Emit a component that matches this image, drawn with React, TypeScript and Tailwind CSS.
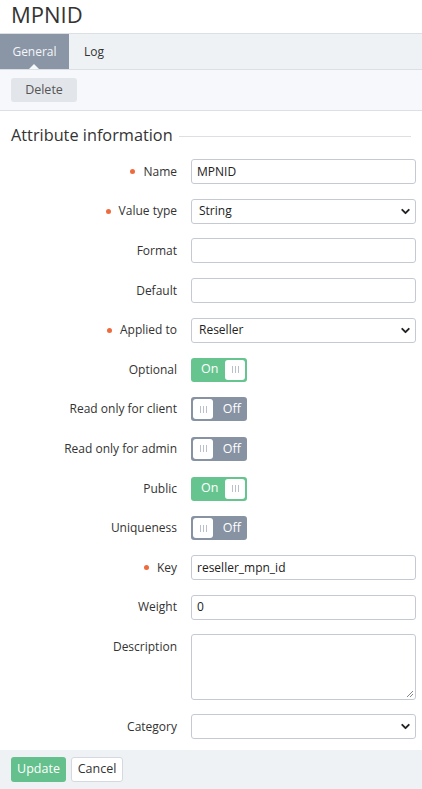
import { ChevronDown } from "lucide-react";

function Label({ text, required }: { text: string; required?: boolean }) {
  return (
    <div className="w-[177px] shrink-0 flex justify-end items-center gap-[8px] text-[12px] text-[#333]">
      {required && <span className="w-[5px] h-[5px] rounded-full bg-[#ef6a3c]" />}
      <span>{text}</span>
    </div>
  );
}

function TextInput({ value }: { value?: string }) {
  return (
    <div className="w-[225px] h-[25px] border border-[#c5cad2] rounded-[3px] bg-white flex items-center px-[5px] text-[12px] text-[#222]">
      {value}
    </div>
  );
}

function SelectBox({ value }: { value?: string }) {
  return (
    <div className="w-[225px] h-[25px] border border-[#c5cad2] rounded-[3px] bg-white flex items-center justify-between pl-[7px] pr-[3px] text-[12px] text-[#222]">
      <span>{value}</span>
      <ChevronDown size={13} strokeWidth={3.5} className="text-[#222]" />
    </div>
  );
}

function Knob() {
  return (
    <div className="w-[20px] h-[20px] bg-white rounded-[3px] flex items-center justify-center gap-[2px]">
      <span className="w-px h-[7px] bg-[#b9c0ca]" />
      <span className="w-px h-[7px] bg-[#b9c0ca]" />
      <span className="w-px h-[7px] bg-[#b9c0ca]" />
    </div>
  );
}

function Toggle({ on }: { on: boolean }) {
  return on ? (
    <div className="w-[56px] h-[24px] rounded-[3px] bg-[#66c58f] flex items-center justify-between pl-[10px] pr-[2px] text-[12.5px] text-white">
      <span>On</span>
      <Knob />
    </div>
  ) : (
    <div className="w-[56px] h-[24px] rounded-[3px] bg-[#8792a3] flex items-center justify-between pl-[2px] pr-[6px] text-[12.5px] text-white">
      <Knob />
      <span>Off</span>
    </div>
  );
}

function Row({ label, required, children }: { label: string; required?: boolean; children: React.ReactNode }) {
  return (
    <div className="flex items-center gap-[14px] h-[39.6px]">
      <Label text={label} required={required} />
      {children}
    </div>
  );
}

export default function App() {
  return (
    <div className="w-[422px] h-[789px] bg-white flex flex-col" style={{ fontFamily: '"Open Sans", "Noto Sans", sans-serif' }}>
      <h1 className="h-[33px] px-[11px] text-[22px] leading-[28px] text-[#333]">MPNID</h1>
      <div className="h-[37px] bg-[#eff2f5] border-y border-[#dcdfe3] flex text-[12px]">
        <div className="relative w-[69px] bg-[#8a95a5] text-[#f4f6f9] flex items-center justify-center">
          General
          <span className="absolute bottom-0 left-[29px] w-0 h-0 border-x-[5px] border-x-transparent border-b-[5px] border-b-[#f6f8fb]" />
        </div>
        <div className="px-[15px] flex items-center text-[#333]">Log</div>
      </div>
      <div className="h-[41px] bg-[#f6f8fb] border-b border-[#dcdfe3] flex items-center px-[11px]">
        <button className="h-[24px] w-[66px] rounded-[3px] bg-[#e2e6eb] text-[12.5px] text-[#555]">Delete</button>
      </div>
      <div className="flex items-center gap-[6px] px-[11px] pt-[10px] h-[38px]">
        <span className="text-[16.3px] text-[#333] whitespace-nowrap">Attribute information</span>
        <span className="flex-1 h-px bg-[#dcdfe3] mt-[2px]" />
      </div>
      <div className="flex flex-col pt-[3px]">
        <Row label="Name" required><TextInput value="MPNID" /></Row>
        <Row label="Value type" required><SelectBox value="String" /></Row>
        <Row label="Format"><TextInput /></Row>
        <Row label="Default"><TextInput /></Row>
        <Row label="Applied to" required><SelectBox value="Reseller" /></Row>
        <Row label="Optional"><Toggle on /></Row>
        <Row label="Read only for client"><Toggle on={false} /></Row>
        <Row label="Read only for admin"><Toggle on={false} /></Row>
        <Row label="Public"><Toggle on /></Row>
        <Row label="Uniqueness"><Toggle on={false} /></Row>
        <Row label="Key" required><TextInput value="reseller_mpn_id" /></Row>
        <Row label="Weight"><TextInput value="0" /></Row>
        <div className="flex items-start gap-[14px] h-[80px] pt-[7px]">
          <div className="w-[177px] shrink-0 flex justify-end text-[12px] text-[#333] pt-[4px]">Description</div>
          <div className="relative w-[225px] h-[66px] border border-[#c5cad2] rounded-[3px] bg-white">
            <svg className="absolute right-[1px] bottom-[1px]" width="8" height="8" viewBox="0 0 8 8">
              <path d="M7 1L1 7M7 4L4 7" stroke="#888" strokeWidth="1" />
            </svg>
          </div>
        </div>
        <Row label="Category"><SelectBox /></Row>
      </div>
      <div className="mt-auto h-[39px] bg-[#eff2f5] flex items-center gap-[5px] px-[11px]">
        <button className="h-[25px] w-[55px] rounded-[3px] bg-[#64c08c] text-[12.5px] text-white">Update</button>
        <button className="h-[25px] w-[52px] rounded-[3px] bg-white border border-[#d5d9df] text-[12.5px] text-[#333]">Cancel</button>
      </div>
    </div>
  );
}
